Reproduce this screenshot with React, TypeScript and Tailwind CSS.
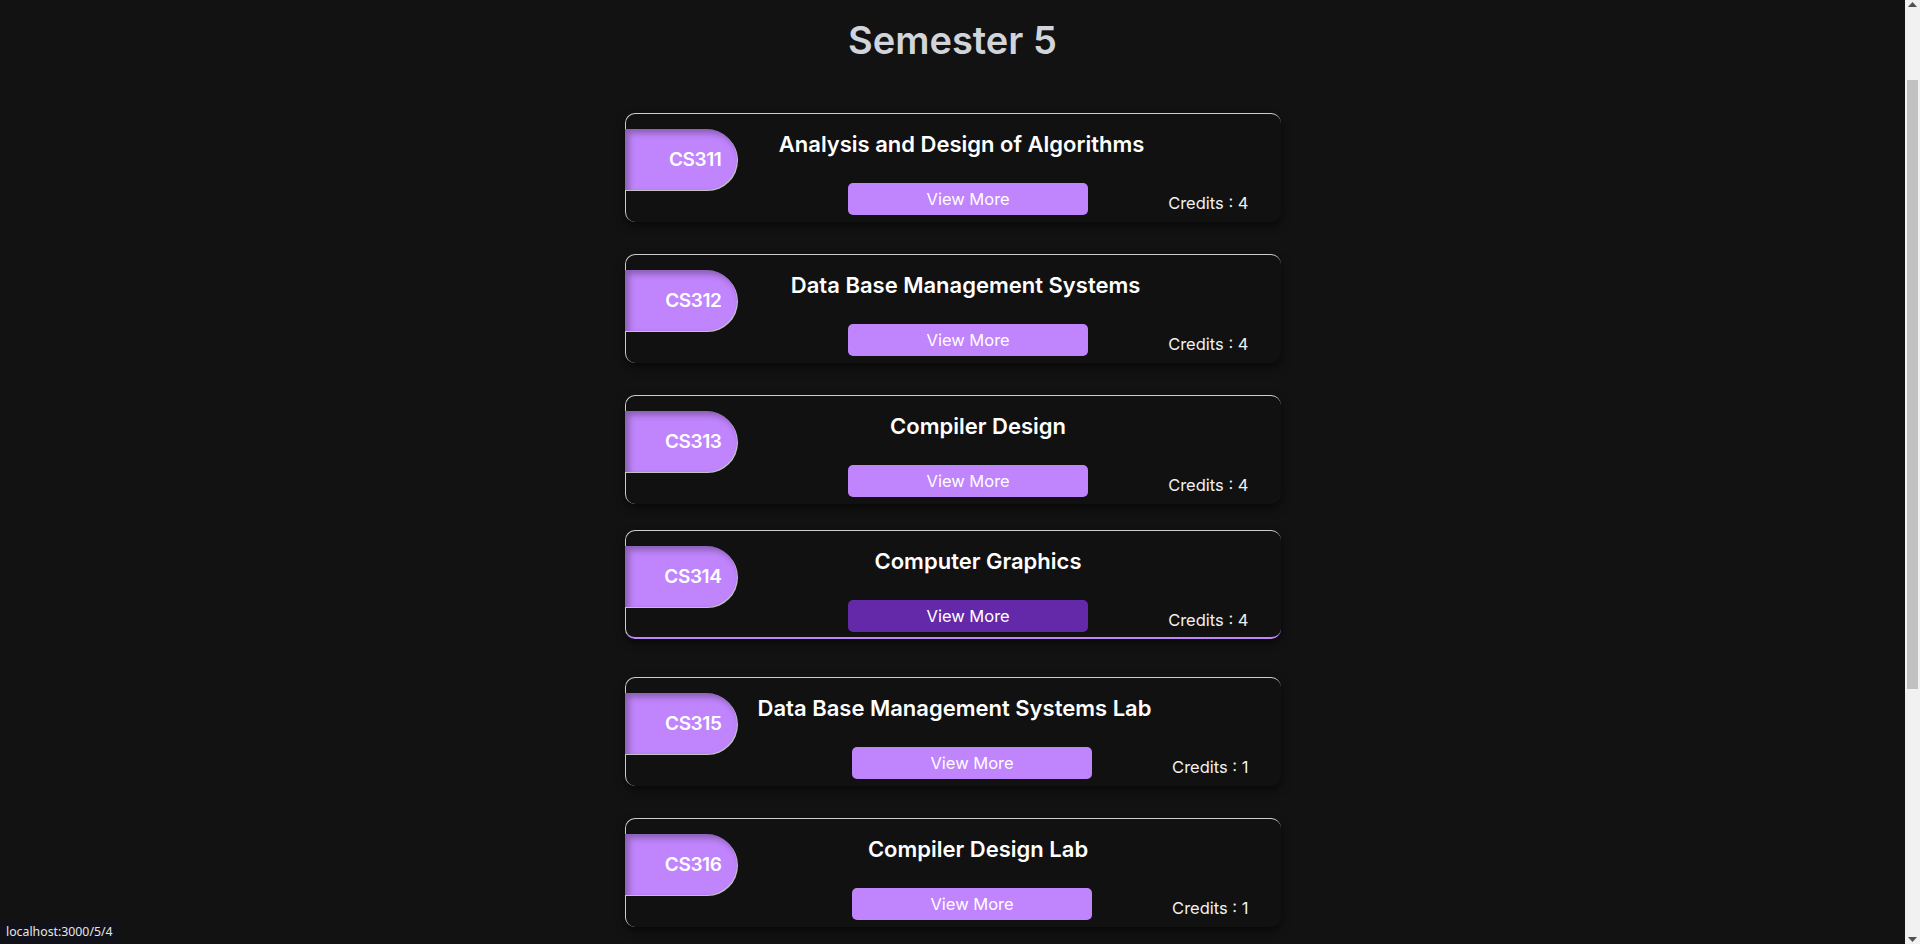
import { useEffect } from "react";
import clsx from "clsx";

interface Course {
    code: string;
    name: string;
    credits: number;
    active?: boolean;
}

const courses: Course[] = [
    { code: "CS311", name: "Analysis and Design of Algorithms", credits: 4 },
    { code: "CS312", name: "Data Base Management Systems", credits: 4 },
    { code: "CS313", name: "Compiler Design", credits: 4 },
    { code: "CS314", name: "Computer Graphics", credits: 4, active: true },
    { code: "CS315", name: "Data Base Management Systems Lab", credits: 1 },
    { code: "CS316", name: "Compiler Design Lab", credits: 1 },
];

function CourseCard({ code, name, credits, active }: Course) {
    return (
        <div
            className={clsx(
                "w-[656px] mx-auto rounded-[10px] border-t border-l border-[#cdcdcd] bg-[#111111] pt-[15px] shadow-[0_4px_10px_rgba(0,0,0,0.55)]",
                active ? "-translate-y-1.5 border-b-2 border-b-[#c084fc] pb-[5px]" : "pb-[7px]"
            )}
        >
            <div className="flex items-start">
                <div className="-ml-px w-[112px] h-[61px] shrink-0 rounded-r-[31px] bg-[#c084fc] flex items-center justify-end pr-[15px] pt-[2px] text-white text-[19px] tracking-[-0.4px] font-semibold shadow-[inset_4px_4px_6px_rgba(0,0,0,0.3),1px_1px_0_rgba(225,225,225,0.85)]">
                    {code}
                </div>
                <div className="flex-1 flex justify-around pr-[122px]">
                    <span />
                    <h2 className="min-w-[300px] text-center text-white text-[22px] leading-[30px] font-semibold whitespace-nowrap">
                        {name}
                    </h2>
                </div>
            </div>

            <div className="flex justify-end items-end gap-20 pr-8 -mt-[7px]">
                <button
                    className={clsx(
                        "w-[240px] h-[32px] rounded-[5px] text-white text-[16.5px]",
                        active ? "bg-[#6429a8]" : "bg-[#c084fc]"
                    )}
                >
                    View More
                </button>
                <p className="text-[16.5px] leading-6 text-[#f0f0f0]">Credits : {credits}</p>
            </div>
        </div>
    );
}

function FakeScrollbar() {
    return (
        <div className="fixed top-0 right-0 w-[15px] h-screen bg-[#f1f1f1]">
            <svg className="absolute top-[2px] left-[3px]" width="9" height="5" viewBox="0 0 9 5">
                <path d="M4.5 0 L9 5 L0 5 Z" fill="#505050" />
            </svg>
            <div className="absolute top-[80px] left-[2px] w-[11px] h-[609px] bg-[#c1c1c1]" />
            <svg className="absolute bottom-[2px] left-[3px]" width="9" height="5" viewBox="0 0 9 5">
                <path d="M0 0 L9 0 L4.5 5 Z" fill="#505050" />
            </svg>
        </div>
    );
}

export default function App() {
    // the page is shown scrolled a little past the top
    useEffect(() => {
        window.scrollTo(0, 98);
    }, []);

    return (
        <div className="min-h-[1410px] bg-[#121212] pt-[118px] pb-[385px] pr-[15px] font-[Inter,sans-serif]">
            <h1 className="text-center text-[38px] leading-10 font-semibold text-[#d1d5db]">Semester 5</h1>

            <div className="mt-[53px] flex flex-col gap-8">
                {courses.map((c) => (
                    <CourseCard key={c.code} {...c} />
                ))}
            </div>

            <div className="fixed left-0 bottom-0 h-[23px] px-[6px] flex items-center bg-[#11111a] rounded-tr-[3px] text-[12.3px] text-[#e6e6e6] font-['Noto_Sans',sans-serif]">
                localhost:3000/5/4
            </div>

            <FakeScrollbar />
        </div>
    );
}
